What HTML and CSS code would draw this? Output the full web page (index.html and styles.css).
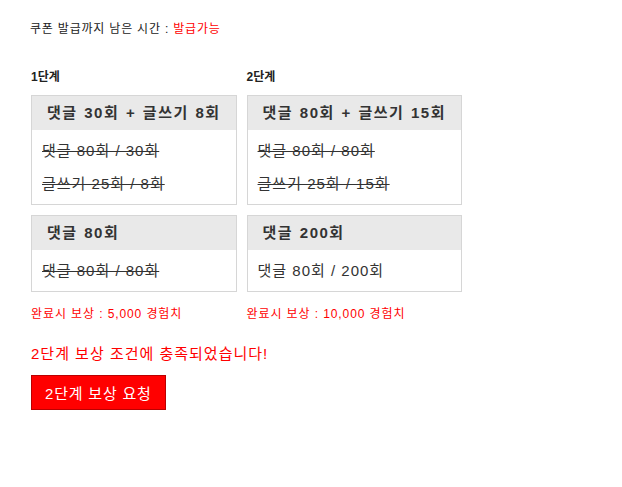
FILE: index.html
```html
<!DOCTYPE html>
<html lang="ko">
<head>
  <meta charset="UTF-8" />
  <title>쿠폰 발급</title>
  <link rel="stylesheet" href="styles.css">
</head>
<body>
  <div class="coupon">
    <p class="timer">쿠폰 발급까지 남은 시간 : <span class="red">발급가능</span></p>

    <div class="stages">
      <!-- 1단계 -->
      <div class="stage">
        <h3>1단계</h3>
        <div class="mission">
          <div class="mission-title">댓글 30회 + 글쓰기 8회</div>
          <div class="mission-body">
            <p class="done">댓글 80회 / 30회</p>
            <p class="done">글쓰기 25회 / 8회</p>
          </div>
        </div>
        <div class="mission">
          <div class="mission-title">댓글 80회</div>
          <div class="mission-body">
            <p class="done">댓글 80회 / 80회</p>
          </div>
        </div>
        <p class="reward">완료시 보상 : 5,000 경험치</p>
      </div>

      <!-- 2단계 -->
      <div class="stage">
        <h3>2단계</h3>
        <div class="mission">
          <div class="mission-title">댓글 80회 + 글쓰기 15회</div>
          <div class="mission-body">
            <p class="done">댓글 80회 / 80회</p>
            <p class="done">글쓰기 25회 / 15회</p>
          </div>
        </div>
        <div class="mission">
          <div class="mission-title">댓글 200회</div>
          <div class="mission-body">
            <p>댓글 80회 / 200회</p>
          </div>
        </div>
        <p class="reward">완료시 보상 : 10,000 경험치</p>
      </div>
    </div>

    <p class="notice">2단계 보상 조건에 충족되었습니다!</p>
    <button class="request-btn">2단계 보상 요청</button>
  </div>
</body>
</html>
```

FILE: styles.css
```css
body {
  margin: 0;
  background: #fff;
  color: #333;
  font-family: "Liberation Sans", "Noto Sans CJK KR", sans-serif;
  letter-spacing: 1px;
}

.coupon {
  padding: 20px 30px;
}

.timer {
  margin: 0;
  font-size: 12px;
  line-height: 18px;
  color: #222;
  letter-spacing: 0.8px;
}

.red {
  color: #f00;
}

.stages {
  display: flex;
  gap: 10px;
  align-items: flex-start;
  margin: 30px 0 0 1px;
}

.stage h3 {
  margin: 0 0 9px;
  font-size: 12px;
  line-height: 18px;
  color: #222;
  letter-spacing: 0;
}

.mission {
  border: 1px solid #d6d6d6;
  margin-bottom: 10px;
}

.mission-title {
  background: #e9e9e9;
  padding: 0 15px;
  height: 34px;
  line-height: 34px;
  font-size: 15px;
  font-weight: bold;
  color: #333;
  letter-spacing: 1.5px;
  word-spacing: 1px;
  white-space: nowrap;
}

.mission-body {
  padding: 4px 10px;
}

.mission-body p {
  margin: 0;
  font-size: 15px;
  line-height: 33px;
  color: #333;
  white-space: nowrap;
}

.mission-body p.done {
  text-decoration: line-through;
}

.reward {
  margin: 13px 0 0;
  font-size: 12px;
  line-height: 18px;
  color: #f00;
  letter-spacing: 0.9px;
}

.notice {
  margin: 20px 0 0 1px;
  font-size: 15px;
  line-height: 22px;
  color: #f00;
}

.request-btn {
  margin: 10px 0 0 1px;
  padding: 0 13px;
  height: 35px;
  background: #f00;
  border: 1px solid #b00;
  color: #fff;
  font-family: inherit;
  font-size: 15px;
  letter-spacing: 0.8px;
  cursor: pointer;
}
```
